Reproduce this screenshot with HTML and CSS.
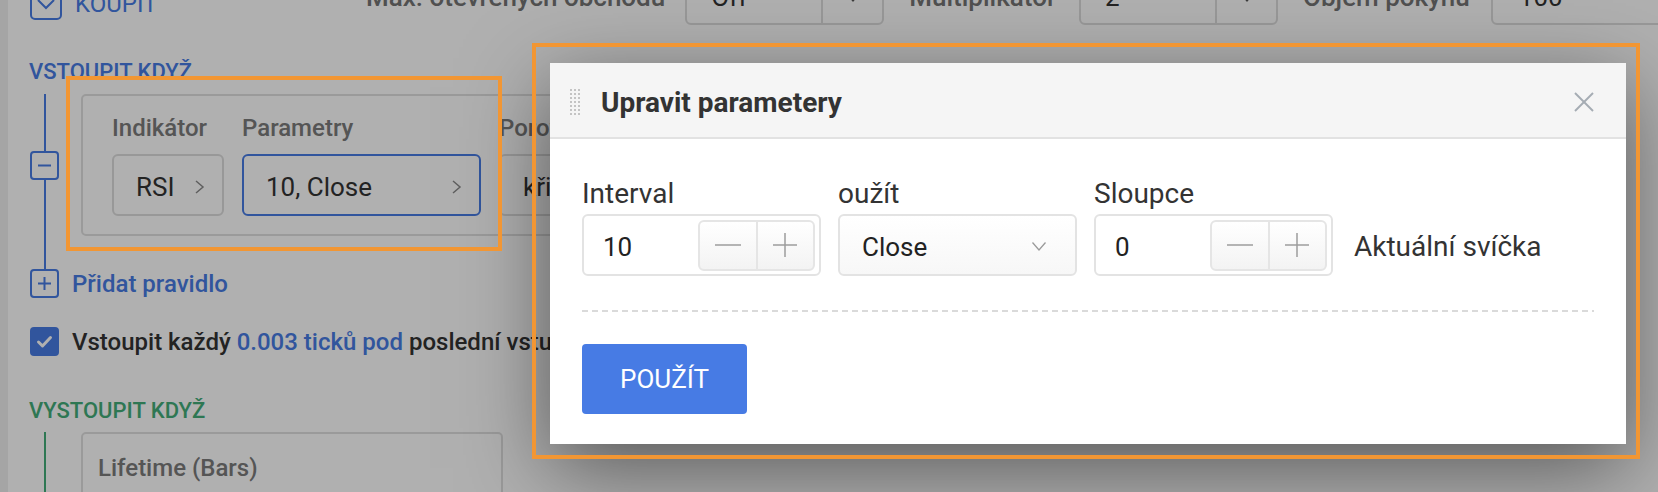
FILE: index.html
```html
<!DOCTYPE html>
<html lang="cs">
<head>
<meta charset="utf-8">
<title>Upravit parametery</title>
<link rel="stylesheet" href="styles.css">
</head>
<body>
<div class="app">
  <div class="topbar">
    <div class="buy">
      <svg class="buy-icon" width="32" height="32" viewBox="0 0 32 32"><rect x="1" y="1" width="30" height="30" rx="4" fill="none" stroke="#477be4" stroke-width="2"/><polyline points="8,12 16,20 24,12" fill="none" stroke="#477be4" stroke-width="2"/></svg>
      <span class="buy-label">KOUPIT</span>
    </div>
    <span class="top-label">Max. otevřených obchodů</span>
    <div class="top-select sel-off"><span class="ts-value">Off</span><span class="ts-arrow"><span class="tri"></span></span></div>
    <span class="top-label">Multiplikátor</span>
    <div class="top-select sel-mult"><span class="ts-value">2</span><span class="ts-arrow"><span class="tri"></span></span></div>
    <span class="top-label">Objem pokynu</span>
    <div class="top-input"><span class="ts-value">100</span></div>
  </div>

  <h2 class="section-title enter">VSTOUPIT KDYŽ</h2>

  <div class="rules">
    <div class="rule-row">
      <div class="gutter"><span class="seg"></span><span class="tbtn"><svg width="25" height="25" viewBox="0 0 25 25"><line x1="6" y1="12.5" x2="19" y2="12.5" stroke="#477be4" stroke-width="2"/></svg></span><span class="seg"></span></div>
      <div class="rule-card">
        <div class="rc-col">
          <div class="rc-label">Indikátor</div>
          <div class="rc-box w-rsi"><span>RSI</span><svg class="chev" width="12" height="14" viewBox="0 0 12 14"><polyline points="2,1 9,7 2,13" fill="none" stroke="#8a8a8a" stroke-width="1.5"/></svg></div>
        </div>
        <div class="rc-col">
          <div class="rc-label">Parametry</div>
          <div class="rc-box w-par active"><span>10, Close</span><svg class="chev" width="12" height="14" viewBox="0 0 12 14"><polyline points="2,1 9,7 2,13" fill="none" stroke="#8a8a8a" stroke-width="1.5"/></svg></div>
        </div>
        <div class="rc-col">
          <div class="rc-label">Porovnání</div>
          <div class="rc-box w-cmp"><span>křižuje nad</span></div>
        </div>
      </div>
    </div>
    <div class="rule-gap"><div class="gutter"><span class="seg"></span></div></div>
    <div class="add-row">
      <span class="tbtn"><svg width="25" height="25" viewBox="0 0 25 25"><line x1="6" y1="12.5" x2="19" y2="12.5" stroke="#477be4" stroke-width="2"/><line x1="12.5" y1="6" x2="12.5" y2="19" stroke="#477be4" stroke-width="2"/></svg></span>
      <span class="add-text">Přidat pravidlo</span>
    </div>
  </div>

  <div class="check-row">
    <span class="check-box"><svg width="29" height="29" viewBox="0 0 29 29"><polyline points="8.5,15 12.5,19 20.5,10.5" fill="none" stroke="#fff" stroke-width="3" stroke-linecap="round" stroke-linejoin="round"/></svg></span>
    <span class="check-text">Vstoupit každý <span class="hl">0.003 ticků pod</span> poslední vstup</span>
  </div>

  <h2 class="section-title exit">VYSTOUPIT KDYŽ</h2>

  <div class="exit-rules">
    <div class="gutter green"><span class="seg"></span></div>
    <div class="exit-card"><div class="rc-label">Lifetime (Bars)</div></div>
  </div>
</div>

<div class="backdrop"></div>

<div class="modal">
  <div class="modal-head">
    <svg class="drag" width="10" height="26" viewBox="0 0 10 26">
      <g fill="#c4c4c4">
        <rect x="0" y="0" width="2" height="2"/><rect x="4" y="0" width="2" height="2"/><rect x="8" y="0" width="2" height="2"/>
        <rect x="0" y="4" width="2" height="2"/><rect x="4" y="4" width="2" height="2"/><rect x="8" y="4" width="2" height="2"/>
        <rect x="0" y="8" width="2" height="2"/><rect x="4" y="8" width="2" height="2"/><rect x="8" y="8" width="2" height="2"/>
        <rect x="0" y="12" width="2" height="2"/><rect x="4" y="12" width="2" height="2"/><rect x="8" y="12" width="2" height="2"/>
        <rect x="0" y="16" width="2" height="2"/><rect x="4" y="16" width="2" height="2"/><rect x="8" y="16" width="2" height="2"/>
        <rect x="0" y="20" width="2" height="2"/><rect x="4" y="20" width="2" height="2"/><rect x="8" y="20" width="2" height="2"/>
        <rect x="0" y="24" width="2" height="2"/><rect x="4" y="24" width="2" height="2"/><rect x="8" y="24" width="2" height="2"/>
      </g>
    </svg>
    <span class="modal-title">Upravit parametery</span>
    <svg class="close" width="20" height="20" viewBox="0 0 20 20"><line x1="1" y1="1" x2="19" y2="19" stroke="#a5acb3" stroke-width="2"/><line x1="19" y1="1" x2="1" y2="19" stroke="#a5acb3" stroke-width="2"/></svg>
  </div>
  <div class="modal-body">
    <div class="fields">
      <div class="field">
        <div class="f-label">Interval</div>
        <div class="f-input">
          <span class="f-value">10</span>
          <div class="stepper">
            <span class="st-btn"><svg width="26" height="4" viewBox="0 0 26 4"><line x1="0" y1="2" x2="26" y2="2" stroke="#9c9c9c" stroke-width="1.5"/></svg></span>
            <span class="st-btn"><svg width="24" height="24" viewBox="0 0 24 24"><line x1="0" y1="12" x2="24" y2="12" stroke="#9c9c9c" stroke-width="1.5"/><line x1="12" y1="0" x2="12" y2="24" stroke="#9c9c9c" stroke-width="1.5"/></svg></span>
          </div>
        </div>
      </div>
      <div class="field">
        <div class="f-label">oužít</div>
        <div class="f-input f-select">
          <span class="f-value">Close</span>
          <svg class="sel-chev" width="14" height="9" viewBox="0 0 14 9"><polyline points="0.5,0.5 7,8 13.5,0.5" fill="none" stroke="#9a9a9a" stroke-width="1.3"/></svg>
        </div>
      </div>
      <div class="field">
        <div class="f-label">Sloupce</div>
        <div class="f-input">
          <span class="f-value">0</span>
          <div class="stepper">
            <span class="st-btn"><svg width="26" height="4" viewBox="0 0 26 4"><line x1="0" y1="2" x2="26" y2="2" stroke="#9c9c9c" stroke-width="1.5"/></svg></span>
            <span class="st-btn"><svg width="24" height="24" viewBox="0 0 24 24"><line x1="0" y1="12" x2="24" y2="12" stroke="#9c9c9c" stroke-width="1.5"/><line x1="12" y1="0" x2="12" y2="24" stroke="#9c9c9c" stroke-width="1.5"/></svg></span>
          </div>
        </div>
      </div>
      <div class="f-note">Aktuální svíčka</div>
    </div>
    <div class="dash"></div>
    <button class="apply" type="button">POUŽÍT</button>
  </div>
</div>

<div class="annot annot-inner"></div>
<div class="annot annot-outer"></div>
</body>
</html>
```

FILE: styles.css
```css
* { box-sizing: border-box; }

html, body {
  margin: 0;
  padding: 0;
  width: 1658px;
  height: 492px;
  overflow: hidden;
}

body {
  background: #efefef;
  font-family: Roboto, "Noto Sans", "Liberation Sans", sans-serif;
  color: #333;
  position: relative;
}

.app {
  margin-left: 8px;
  height: 492px;
  background: #fff;
  padding-left: 21px;
  overflow: hidden;
}

/* top bar (scrolled, partly cut) */
.topbar {
  margin-top: -31px;
  height: 56px;
  display: flex;
  align-items: center;
  white-space: nowrap;
}
.buy {
  width: 337px;
  flex: none;
  display: flex;
  align-items: center;
  gap: 13px;
  margin-top: 14px;
}
.buy-icon { display: block; margin-left: 1px; flex: none; }
.buy-label {
  font-size: 24px;
  color: #477be4;
}
.top-label {
  font-size: 26px;
  font-weight: 500;
  color: #747474;
  flex: none;
}
.top-select {
  flex: none;
  width: 199px;
  height: 56px;
  border: 2px solid #dcdcdc;
  border-radius: 6px;
  display: flex;
  align-items: center;
  margin: 0 25px 0 20px;
}
.sel-mult { margin-left: 23px; }
.ts-value {
  flex: 1;
  padding-left: 24px;
  font-size: 26px;
  color: #333;
}
.ts-arrow {
  width: 61px;
  height: 100%;
  border-left: 2px solid #dcdcdc;
  display: flex;
  justify-content: center;
  align-items: center;
}
.tri {
  width: 0;
  height: 0;
  border-left: 5px solid transparent;
  border-right: 5px solid transparent;
  border-top: 6px solid #555;
  margin-top: 4px;
}
.top-input {
  flex: none;
  width: 220px;
  height: 56px;
  border: 2px solid #dcdcdc;
  border-radius: 6px;
  margin-left: 21px;
  display: flex;
  align-items: center;
}
.top-input .ts-value { padding-left: 26px; }

/* sections */
.section-title {
  margin: 34px 0 0;
  height: 26px;
  line-height: 26px;
  font-size: 22px;
  font-weight: 500;
}
.section-title.enter { color: #477be4; }
.section-title.exit { color: #43ad79; margin-top: 42px; }

.rules { margin-top: 9px; }

.rule-row { display: flex; }

.gutter {
  width: 29px;
  margin-left: 1px;
  margin-right: 22px;
  display: flex;
  flex-direction: column;
  align-items: center;
  flex: none;
}
.gutter .seg {
  flex: 1;
  width: 2px;
  background: #477be4;
}
.gutter.green .seg { background: #43ad79; }

.tbtn {
  flex: none;
  width: 29px;
  height: 29px;
  border: 2px solid #477be4;
  border-radius: 4px;
  background: #fff;
  display: flex;
  align-items: center;
  justify-content: center;
}
.tbtn svg { display: block; }

.rule-card {
  width: 720px;
  flex: none;
  border: 2px solid #e0e0e0;
  border-radius: 5px;
  padding: 18px 29px;
  display: flex;
  gap: 18px;
}
.rc-col { display: flex; flex-direction: column; gap: 12px; }
.rc-label {
  font-size: 24px;
  font-weight: 500;
  color: #7b7b7b;
  line-height: 28px;
  white-space: nowrap;
}
.rc-box {
  height: 62px;
  border: 2px solid #dcdcdc;
  border-radius: 6px;
  display: flex;
  align-items: center;
  justify-content: space-between;
  padding: 0 16px 0 22px;
  font-size: 26px;
  color: #333;
  white-space: nowrap;
}
.rc-box span { padding-top: 4px; }
.rc-box.active { border-color: #477be4; }
.rc-box .chev { display: block; flex: none; margin-top: 3px; }
.w-rsi { width: 112px; }
.w-par { width: 239px; }
.w-cmp { width: 240px; }

.rule-gap { height: 33px; display: flex; }
.rule-gap .gutter { height: 100%; }

.add-row {
  display: flex;
  align-items: center;
  gap: 13px;
  padding-left: 1px;
}
.add-text {
  font-size: 24px;
  font-weight: 500;
  color: #477be4;
}

.check-row {
  margin-top: 29px;
  display: flex;
  align-items: center;
  gap: 13px;
  padding-left: 1px;
  white-space: nowrap;
}
.check-box {
  width: 29px;
  height: 29px;
  border-radius: 4px;
  background: #477be4;
  flex: none;
}
.check-box svg { display: block; }
.check-text {
  font-size: 24px;
  font-weight: 500;
  color: #333;
}
.check-text .hl { color: #477be4; }

.exit-rules {
  margin-top: 8px;
  display: flex;
  height: 120px;
}
.exit-card {
  width: 422px;
  border: 2px solid #e0e0e0;
  border-radius: 5px;
  padding: 20px 15px;
  flex: none;
}

/* backdrop */
.backdrop {
  position: absolute;
  inset: 0;
  background: rgba(0, 0, 0, 0.31);
}

/* modal */
.modal {
  position: absolute;
  left: 550px;
  top: 63px;
  width: 1076px;
  background: #fff;
  box-shadow: 0 24px 80px rgba(0, 0, 0, 0.5);
}
.modal-head {
  height: 76px;
  background: #f5f5f5;
  border-bottom: 2px solid #e2e2e2;
  display: flex;
  align-items: center;
  padding: 4px 32px 0 20px;
}
.drag { display: block; flex: none; }
.modal-title {
  margin-left: 21px;
  font-size: 28px;
  font-weight: 700;
  color: #333;
  flex: 1;
}
.close { display: block; flex: none; }

.modal-body {
  padding: 38px 32px 30px;
}
.fields {
  display: flex;
  align-items: flex-end;
}
.field {
  width: 239px;
  margin-right: 17px;
  flex: none;
}
.field:nth-child(3) { margin-right: 21px; }
.f-label {
  font-size: 28px;
  line-height: 33px;
  color: #333;
  margin-bottom: 4px;
}
.f-input {
  height: 62px;
  border: 2px solid #e3e3e3;
  border-radius: 6px;
  display: flex;
  align-items: center;
  padding: 0 4px 0 19px;
  background: #fff;
}
.f-value {
  font-size: 26px;
  color: #222;
  flex: 1;
  padding-top: 3px;
}
.f-select {
  padding: 0 29px 0 22px;
  background: linear-gradient(#ffffff, #f7f7f7);
}
.sel-chev { display: block; flex: none; margin-top: 3px; }
.stepper {
  width: 117px;
  height: 51px;
  border: 2px solid #e5e5e5;
  border-radius: 6px;
  background: linear-gradient(#ffffff, #f3f3f3);
  display: flex;
  flex: none;
}
.st-btn {
  flex: 1;
  display: flex;
  align-items: center;
  justify-content: center;
}
.st-btn + .st-btn { border-left: 2px solid #e5e5e5; }
.st-btn svg { display: block; }
.f-note {
  font-size: 28px;
  color: #333;
  height: 62px;
  line-height: 62px;
  padding-top: 2px;
  white-space: nowrap;
}

.dash {
  margin-top: 34px;
  height: 2px;
  background: repeating-linear-gradient(to right, #dadada 0 6px, transparent 6px 10px);
}

.apply {
  display: block;
  margin-top: 32px;
  width: 165px;
  height: 70px;
  border: none;
  border-radius: 4px;
  background: #477be4;
  color: #fff;
  font-family: Roboto, "Noto Sans", "Liberation Sans", sans-serif;
  font-size: 26px;
  font-weight: 400;
  padding: 0;
}

/* annotation frames */
.annot {
  position: absolute;
  border: 4px solid #f29633;
  pointer-events: none;
}
.annot-inner {
  left: 66px;
  top: 76px;
  width: 436px;
  height: 175px;
}
.annot-outer {
  left: 532px;
  top: 43px;
  width: 1108px;
  height: 416px;
}
```
